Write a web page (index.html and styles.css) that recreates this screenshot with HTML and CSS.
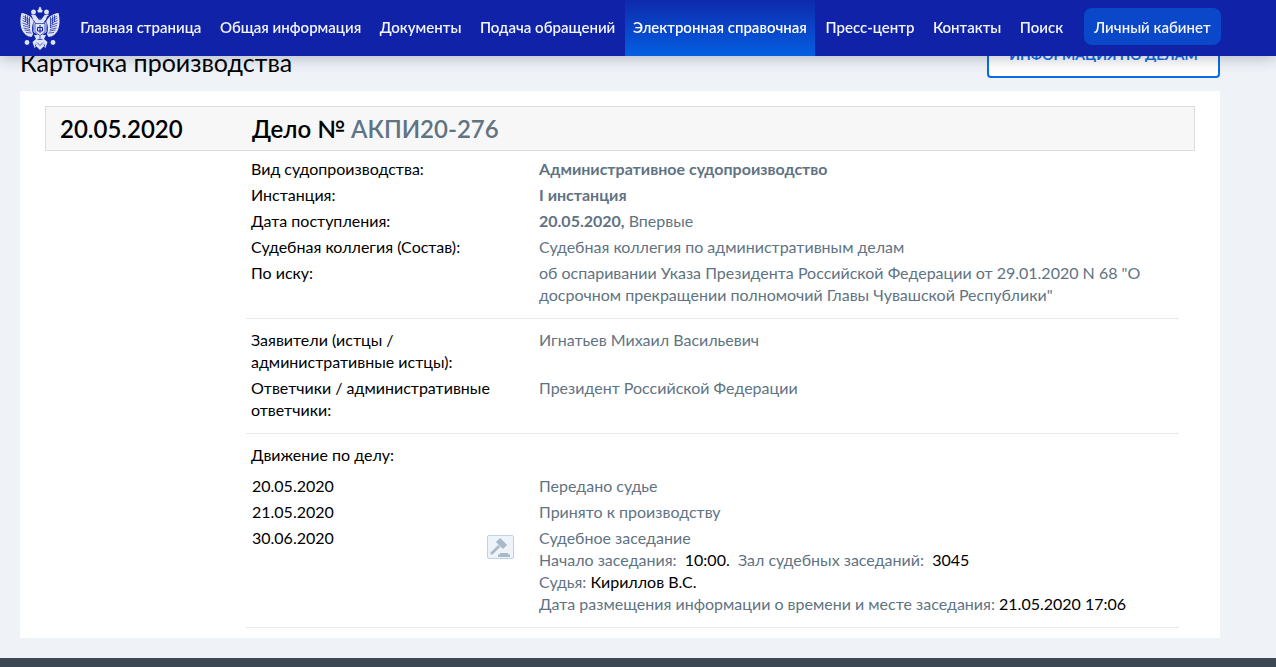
FILE: index.html
```html
<!DOCTYPE html>
<html lang="ru">
<head>
<meta charset="utf-8">
<title>Карточка производства</title>
<link rel="stylesheet" href="styles.css">
</head>
<body>
<header class="topbar">
  <svg class="crest" width="40" height="46" viewBox="0 0 40 46">
    <g fill="#dfe3f6">
      <path d="M20 1.500l1.200 1.500v1.200l1.600 1.200-1 2.200h-3.600l-1-2.200 1.600-1.200V3z"/>
      <path d="M11 6.500a2.600 2.600 0 0 1 5 0l-.6 2.400h-3.800zM24 6.500a2.600 2.600 0 0 1 5 0l-.6 2.400h-3.800z"/>
      <path d="M11 10c2-1 4.500-.5 5.500 1.500l3 4 .5-3 .5 3 3-4c1-2 3.500-2.500 5.500-1.500l-2 1.500-1 3-3 3.500h-7l-3-3.500-1-3z"/>
      <path d="M14 17C12 12 7 8.500 1.500 8c-1.500 6-1.500 13 1 18 2 3.500 5 5.500 9 6l1.500-3.500c-1.500-3-1-8.500.5-11.500z"/>
      <path d="M26 17c2-5 7-8.500 12.500-9 1.500 6 1.500 13-1 18-2 3.500-5 5.500-9 6L27 28.500c1.500-3 1-8.500-.5-11.500z"/>
      <path d="M14 30h12l-2 4 3.500 3-2 6-2-1.500L20 45l-3.500-3.500-2 1.500-2-6 3.500-3z"/>
      <circle cx="7" cy="37.500" r="2.400"/><circle cx="33" cy="37.500" r="2.400"/>
      <path d="M13.500 17.500h13V27l-6.500 4.500-6.500-4.500z"/>
    </g>
    <g fill="none" stroke="#1023a8" stroke-width=".7">
      <path d="M3 11l7 4M2.500 13l7 3.500M2.500 15.500l7 3M2.500 18l7 2.500M3 20.500l7 2M3.500 23l6.500 1.500M4.500 25l6 1M6 27.500l5.500.5M5.500 10v7M7.500 10.500v9M9.500 12v11"/>
      <path d="M37 11l-7 4M37.500 13l-7 3.500M37.500 15.500l-7 3M37.500 18l-7 2.500M37 20.500l-7 2M36.500 23l-6.500 1.500M35.500 25l-6 1M34 27.500l-5.500.5M34.500 10v7M32.500 10.500v9M30.500 12v11"/>
      <path d="M15 18.500h10V27l-5 3.500-5-3.500z"/>
      <path d="M17 37.500l3 3 3-3M17.500 34.500h5M20 31v4M16 39l-1 3M24 39l1 3"/>
    </g>
    <path d="M20 20v8M17.500 22.500h5M17.500 22.500v3.500h5v-3.500" fill="none" stroke="#1023a8" stroke-width="1"/>
    <path d="M8 31l5-1.500M32 31l-5-1.500" stroke="#dfe3f6" stroke-width="1.200"/>
  </svg>
  <nav class="menu">
    <a class="menu-item">Главная страница</a>
    <a class="menu-item">Общая информация</a>
    <a class="menu-item">Документы</a>
    <a class="menu-item">Подача обращений</a>
    <a class="menu-item active">Электронная справочная</a>
    <a class="menu-item">Пресс-центр</a>
    <a class="menu-item">Контакты</a>
    <a class="menu-item">Поиск</a>
    <a class="cabinet">Личный кабинет</a>
  </nav>
</header>
<main class="page">
  <div class="title-row">
    <h1 class="title">Карточка производства</h1>
    <a class="outline-btn">ИНФОРМАЦИЯ ПО ДЕЛАМ</a>
  </div>
  <section class="card">
    <div class="case-head">
      <div class="case-date">20.05.2020</div>
      <div class="case-no">Дело № <span class="case-id">АКПИ20-276</span></div>
    </div>
    <div class="group">
      <div class="row"><div class="label">Вид судопроизводства:</div><div class="value strong">Административное судопроизводство</div></div>
      <div class="row"><div class="label">Инстанция:</div><div class="value strong">I инстанция</div></div>
      <div class="row"><div class="label">Дата поступления:</div><div class="value"><b>20.05.2020,</b> Впервые</div></div>
      <div class="row"><div class="label">Судебная коллегия (Состав):</div><div class="value">Судебная коллегия по административным делам</div></div>
      <div class="row"><div class="label">По иску:</div><div class="value">об оспаривании Указа Президента Российской Федерации от 29.01.2020 N 68 "О досрочном прекращении полномочий Главы Чувашской Республики"</div></div>
    </div>
    <div class="group">
      <div class="row"><div class="label">Заявители (истцы / административные истцы):</div><div class="value">Игнатьев Михаил Васильевич</div></div>
      <div class="row"><div class="label">Ответчики / административные ответчики:</div><div class="value">Президент Российской Федерации</div></div>
    </div>
    <div class="group moves">
      <div class="moves-title">Движение по делу:</div>
      <div class="move"><div class="move-date">20.05.2020</div><div class="move-icon"></div><div class="value">Передано судье</div></div>
      <div class="move"><div class="move-date">21.05.2020</div><div class="move-icon"></div><div class="value">Принято к производству</div></div>
      <div class="move">
        <div class="move-date">30.06.2020</div>
        <div class="move-icon">
          <svg class="gavel" width="27" height="24" viewBox="0 0 27 24">
            <rect x="0.5" y="0.5" width="26" height="23" rx="1.500" fill="#eef3f9" stroke="#bfd2e4"/>
            <path d="M20.100 9.900l-4.200 4.200-7-7 4.200-4.200z" fill="#a9b9c8"/>
            <path d="M11.200 10l2 2L5 20l-2-2z" fill="#a9b9c8"/>
            <path d="M13 18h8v1.500h2V22H11v-2.500h2z" fill="#a9b9c8"/>
          </svg>
        </div>
        <div class="value">
          <div>Судебное заседание</div>
          <div>Начало заседания: <span class="dark">&nbsp;10:00.</span> &nbsp;Зал судебных заседаний: <span class="dark">&nbsp;3045</span></div>
          <div>Судья: <span class="dark">Кириллов В.С.</span></div>
          <div>Дата размещения информации о времени и месте заседания: <span class="dark">21.05.2020 17:06</span></div>
        </div>
      </div>
    </div>
  </section>
</main>
<footer class="footer"></footer>
</body>
</html>
```
FILE: styles.css
```css
* { box-sizing: border-box; }
html, body { margin: 0; height: 667px; overflow: hidden; }
body {
  background: #eff3f8;
  font-family: Lato, "Open Sans", sans-serif;
  font-size: 16px;
  line-height: 22px;
  color: #000;
}
.topbar {
  position: fixed;
  top: 0; left: 0; right: 0;
  height: 56px;
  z-index: 5;
  display: flex;
  align-items: center;
  padding-left: 20px;
  background: #1023a8;
  box-shadow: 0 2px 14px rgba(20, 30, 60, .28);
}
.crest { flex: none; margin-right: 11px; }
.menu { display: flex; align-items: center; height: 56px; }
.menu-item {
  display: flex;
  align-items: center;
  height: 56px;
  padding: 0 9.250px 2px;
  color: #f2f4fb;
  font-size: 15px;
  font-weight: 600;
  white-space: nowrap;
}
.menu-item.active {
  padding: 0 8.500px 2px;
  margin: 0 1px 0 0;
  background: linear-gradient(#0e2aac, #045fe2);
  color: #fff;
}
.cabinet {
  margin-left: 11.500px;
  height: 37px;
  width: 137px;
  margin-top: -3px;
  display: flex;
  align-items: center;
  justify-content: center;
  border-radius: 8px;
  background: #0a47c9;
  color: #f2f4fb;
  font-size: 15px;
  font-weight: 600;
  white-space: nowrap;
}
.page { padding: 38px 56px 0 20px; height: 658px; }
.title-row { display: flex; justify-content: space-between; align-items: flex-end; height: 40px; margin-bottom: 13px; }
.title { margin: 0 0 1px; font-size: 25px; line-height: 30px; font-weight: 400; }
.outline-btn {
  flex: none;
  width: 233px;
  height: 47px;
  display: flex;
  align-items: center;
  justify-content: center;
  border: 2px solid #0a6be8;
  border-radius: 4px;
  background: #fff;
  color: #0a6be8;
  font-size: 14px;
  font-weight: 700;
}
.card { background: #fff; height: 547px; padding: 15px 25px 0; }
.case-head {
  display: flex;
  align-items: center;
  height: 45px;
  padding-left: 14px;
  border: 1px solid #dcdcdc;
  background: #f7f7f7;
  font-size: 24px;
  font-weight: 600;
}
.case-date { width: 192px; }
.case-id { color: #5f7383; }
.group { margin: 0 16px 0 201px; padding: 5px 0 10px; border-bottom: 1px solid #e9e9e9; }
.group + .group { padding-top: 8px; padding-bottom: 10px; }
.row { display: grid; grid-template-columns: 293px 1fr; padding: 2px 0; }
.label { padding: 0 20px 0 5px; }
.value { color: #5f7383; }
.value b, .strong { font-weight: 700; }
.dark { color: #000; }
.moves-title { padding: 2px 5px 7px; }
.move { display: grid; grid-template-columns: 240px 53px 1fr; padding: 2px 0; }
.move-date { padding-left: 6px; }
.move-icon { padding: 8px 0 0 1px; }
.gavel { display: block; }
.footer { height: 9px; background: #3d4852; }
```
